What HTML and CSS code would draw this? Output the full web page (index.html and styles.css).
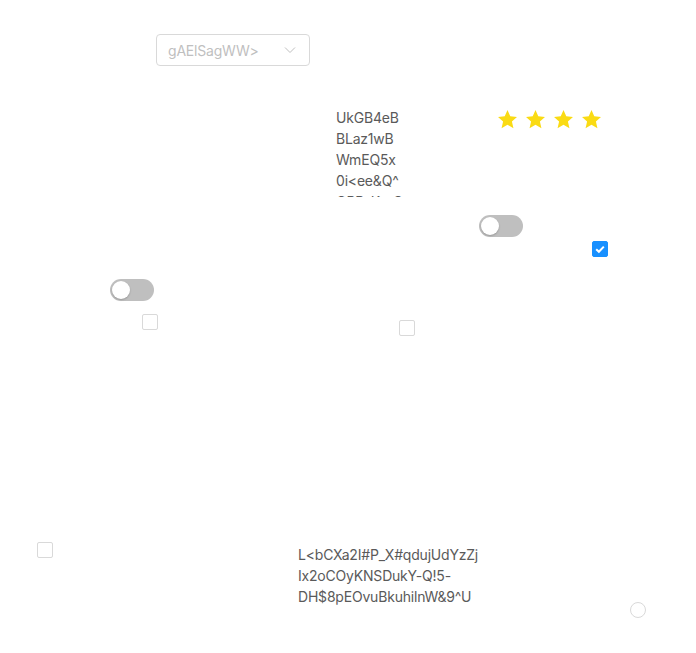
FILE: index.html
```html
<!DOCTYPE html>
<html>
<head>
<meta charset="utf-8">
<link rel="stylesheet" href="styles.css">
</head>
<body>
<div class="canvas">
  <div class="select w-select">
    <span class="select-text">gAElSagWW&gt;</span>
    <svg class="chev" width="12" height="8" viewBox="0 0 12 8"><path d="M1 1.5 L6 6.5 L11 1.5" fill="none" stroke="#bfbfbf" stroke-width="1"/></svg>
  </div>

  <div class="textbox w-textbox">UkGB4eB<br>BLaz1wB<br>WmEQ5x<br>0i&lt;ee&amp;Q^<br>OPP_K@C</div>

  <div class="stars w-stars">
    <svg viewBox="0 0 24 24" class="star"><path d="M12 2.2l2.9 6.5 7 .7-5.3 4.7 1.6 6.9L12 17.4 5.8 21l1.6-6.9L2.1 9.4l7-.7z"/></svg>
    <svg viewBox="0 0 24 24" class="star"><path d="M12 2.2l2.9 6.5 7 .7-5.3 4.7 1.6 6.9L12 17.4 5.8 21l1.6-6.9L2.1 9.4l7-.7z"/></svg>
    <svg viewBox="0 0 24 24" class="star"><path d="M12 2.2l2.9 6.5 7 .7-5.3 4.7 1.6 6.9L12 17.4 5.8 21l1.6-6.9L2.1 9.4l7-.7z"/></svg>
    <svg viewBox="0 0 24 24" class="star"><path d="M12 2.2l2.9 6.5 7 .7-5.3 4.7 1.6 6.9L12 17.4 5.8 21l1.6-6.9L2.1 9.4l7-.7z"/></svg>
  </div>

  <div class="switch w-switch1"><span class="knob"></span></div>
  <div class="checkbox checked w-check1">
    <svg width="16" height="16" viewBox="0 0 16 16"><path d="M4.2 8.2 L6.9 10.8 L11.8 5.6" fill="none" stroke="#fff" stroke-width="2"/></svg>
  </div>

  <div class="switch w-switch2"><span class="knob"></span></div>
  <div class="checkbox w-check2"></div>
  <div class="checkbox w-check3"></div>
  <div class="checkbox w-check4"></div>

  <div class="para w-para">L&lt;bCXa2I#P_X#qdujUdYzZj<br>Ix2oCOyKNSDukY-Q!5-<br>DH$8pEOvuBkuhilnW&amp;9^U</div>

  <div class="radio w-radio"></div>
</div>
</body>
</html>
```
FILE: styles.css
```css
html, body {
  margin: 0;
  padding: 0;
  background: #fff;
}
.canvas {
  position: relative;
  width: 696px;
  height: 653px;
  font-family: Inter, "Noto Sans", sans-serif;
  font-size: 14px;
  line-height: 21px;
  letter-spacing: -0.2px;
  color: #5a5a5a;
}
.select {
  position: absolute;
  left: 156px;
  top: 34px;
  width: 154px;
  height: 32px;
  box-sizing: border-box;
  border: 1px solid #d9d9d9;
  border-radius: 4px;
  display: flex;
  align-items: center;
  padding: 0 11px;
}
.select-text {
  color: #bfbfbf;
  flex: 1;
}
.chev {
  margin-right: 2px;
}
.textbox {
  position: absolute;
  left: 336px;
  top: 107px;
  height: 90px;
  overflow: hidden;
}
.stars {
  position: absolute;
  left: 496px;
  top: 108px;
  display: flex;
  gap: 5px;
}
.star {
  width: 23px;
  height: 23px;
  fill: #fadb14;
}
.switch {
  position: absolute;
  width: 44px;
  height: 22px;
  border-radius: 11px;
  background: #bfbfbf;
}
.knob {
  position: absolute;
  left: 2px;
  top: 2px;
  width: 18px;
  height: 18px;
  border-radius: 50%;
  background: #fff;
  box-shadow: 0 1px 2px rgba(0,0,0,0.2);
}
.w-switch1 { left: 479px; top: 215px; }
.w-switch2 { left: 110px; top: 279px; }
.checkbox {
  position: absolute;
  width: 16px;
  height: 16px;
  box-sizing: border-box;
  border: 1px solid #d9d9d9;
  border-radius: 2px;
  background: #fff;
}
.checkbox.checked {
  background: #1890ff;
  border-color: #1890ff;
}
.checkbox.checked svg {
  position: absolute;
  left: -1px;
  top: -1px;
}
.w-check1 { left: 592px; top: 241px; }
.w-check2 { left: 142px; top: 314px; }
.w-check3 { left: 399px; top: 320px; }
.w-check4 { left: 37px; top: 542px; }
.para {
  position: absolute;
  left: 298px;
  top: 544px;
}
.radio {
  position: absolute;
  left: 630px;
  top: 602px;
  width: 16px;
  height: 16px;
  box-sizing: border-box;
  border: 1px solid #d9d9d9;
  border-radius: 50%;
}
```
